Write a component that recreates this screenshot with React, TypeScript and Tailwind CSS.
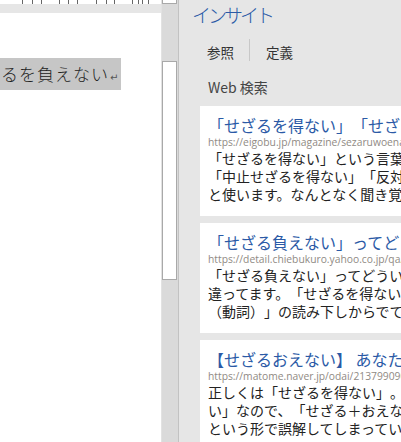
import React from 'react';

const jp = { fontFamily: '"Noto Sans CJK JP", "Noto Sans", sans-serif' };
const url = { fontFamily: '"Open Sans", "Liberation Sans", Arial, sans-serif' };

interface Result {
  title: string;
  link: string;
  lines: string[];
}

const results: Result[] = [
  {
    title: '「せざるを得ない」「せざるを得ない」',
    link: 'https://eigobu.jp/magazine/sezaruwoenai',
    lines: ['「せざるを得ない」という言葉を', '「中止せざるを得ない」「反対せざ', 'と使います。なんとなく聞き覚えが'],
  },
  {
    title: '「せざる負えない」ってどういう',
    link: 'https://detail.chiebukuro.yahoo.co.jp/qa/question',
    lines: ['「せざる負えない」ってどういう意', '違ってます。「せざるを得ない」', '（動詞）」の読み下しからでてい'],
  },
  {
    title: '【せざるおえない】 あなたは',
    link: 'https://matome.naver.jp/odai/2137990900000',
    lines: ['正しくは「せざるを得ない」。「得', 'い」なので、「せざる＋おえない」', 'という形で誤解してしまっている'],
  },
];

const ticks = [22, 32, 41, 59, 68, 77, 96, 106, 114, 132, 138, 142, 148];

const ResultCard: React.FC<{ item: Result }> = ({ item }) => (
  <div className="bg-white w-[240px] h-[110px] pl-[8px] pt-[8px] overflow-hidden [text-spacing-trim:space-all]">
    <div className="text-[16px] leading-[22px] text-[#2b5aa6] whitespace-nowrap" style={jp}>
      {item.title}
    </div>
    <div className="text-[10.3px] leading-[13px] text-[#908a84] whitespace-nowrap" style={url}>
      {item.link}
    </div>
    <div className="text-[14px] leading-[18px] text-[#222] whitespace-nowrap" style={jp}>
      {item.lines.map(line => (
        <div key={line}>{line}</div>
      ))}
    </div>
  </div>
);

export default function App() {
  return (
    <div className="w-[401px] h-[442px] flex overflow-hidden bg-white">
      {/* document */}
      <div className="w-[161px] shrink-0 flex flex-col bg-white">
        <svg width="161" height="4" className="block">
          {ticks.map(x => (
            <line key={x} x1={x + 0.5} y1={0} x2={x + 0.5} y2={4} stroke="#666" strokeWidth={1} />
          ))}
        </svg>
        <div className="h-[9px] bg-[#e6e6e6]" />
        <div className="mt-[45px] w-[121px] h-[32px] bg-[#c6c6c6] flex items-center">
          <span className="text-[17px] tracking-[1px] text-[#222] font-light pl-[1px]" style={jp}>
            るを負えない
          </span>
          <span className="text-[10px] text-[#555] ml-[1px] mt-[6px]" style={{ fontFamily: '"DejaVu Sans", sans-serif' }}>
            ↵
          </span>
        </div>
      </div>

      {/* scrollbar */}
      <div className="w-[17px] shrink-0 bg-[#dadada] border-l border-[#e2e2e2] flex flex-col">
        <div className="h-[4px] w-[15px] bg-white border border-t-0 border-[#a9a9a9]" />
        <div className="h-[57px]" />
        <div className="h-[219px] w-[15px] bg-white border border-[#a9a9a9]" />
      </div>
      <div className="w-[1px] shrink-0 bg-[#c2c2c2]" />

      {/* insights pane */}
      <div className="flex-1 bg-[#e6e6e6] flex flex-col overflow-hidden">
        <div className="h-[32px] pl-[13px] text-[19px] leading-[30px] text-[#2b5aa6] font-light tracking-[-3px]" style={jp}>
          インサイト
        </div>
        <div className="h-[22px] mt-[9px] pl-[28px] flex items-center text-[13.5px] text-[#333]" style={jp}>
          <span className="pt-[4px]">参照</span>
          <div className="w-[1px] h-[22px] bg-[#c8c8c8] ml-[15px] mr-[16px]" />
          <span className="pt-[4px]">定義</span>
        </div>
        <div className="h-[22px] mt-[16px] pl-[29px] flex items-center text-[14px] text-[#444]" style={jp}>
          Web 検索
        </div>
        <div className="mt-[8px] pl-[21px] flex flex-col gap-[7px]">
          {results.map(r => (
            <ResultCard key={r.link} item={r} />
          ))}
        </div>
      </div>
    </div>
  );
}
